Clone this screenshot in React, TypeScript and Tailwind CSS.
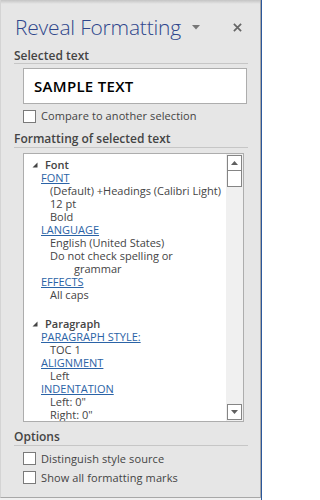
import React from "react";

const Tri = () => (
  <svg width="6" height="6" viewBox="0 0 6 6" className="shrink-0">
    <polygon points="5.5,0.5 5.5,5.5 0.5,5.5" fill="#444" />
  </svg>
);

const Check = ({ label }: { label: string }) => (
  <div className="flex items-center h-[19px] pl-[9px]">
    <div className="w-[13px] h-[13px] border border-[#7a7a7a] bg-white shrink-0" />
    <span className="ml-[5px] text-[11px] leading-[14px] text-[#444] tracking-[0.1px]">{label}</span>
  </div>
);

const Row = ({ children, cls = "" }: { children: React.ReactNode; cls?: string }) => (
  <div className={`h-[13px] flex items-center whitespace-nowrap ${cls}`}>{children}</div>
);

const Link = ({ t }: { t: string }) => (
  <Row cls="pl-[17px]">
    <span className="leading-[13px] text-[#2b63a6] underline underline-offset-[1px] decoration-[#2b63a6]">{t}</span>
  </Row>
);

const Val = ({ t, pl = "pl-[26px]" }: { t: string; pl?: string }) => (
  <Row cls={pl}>
    <span className="leading-[13px]">{t}</span>
  </Row>
);

export default function App() {
  return (
    <div
      className="w-[262px] h-[500px] flex bg-[#f0f0f0] overflow-hidden"
      style={{ fontFamily: "'Segoe UI','Open Sans','Noto Sans',sans-serif" }}
    >
      <div className="w-[261px] h-[498px] flex flex-col bg-[#e6e6e6] border-r border-b border-[#a8a8a8] border-l border-l-[#d4d4d4]">
        <div className="h-[4px] bg-gradient-to-b from-[#c4c4c4] to-[#e6e6e6]" />
        {/* title */}
        <div className="h-[46px] flex items-center pl-[14px] pr-[18px]">
          <span className="text-[21px] font-light text-[#2f468c] leading-none tracking-[-0.2px]">Reveal Formatting</span>
          <svg width="8" height="5" viewBox="0 0 8 5" className="ml-[11px] mt-[1px]">
            <polygon points="0,0 8,0 4,4.5" fill="#777" />
          </svg>
          <svg width="9" height="9" viewBox="0 0 10 10" className="ml-auto">
            <path d="M1 1 L9 9 M9 1 L1 9" stroke="#666" strokeWidth="1.9" />
          </svg>
        </div>
        <div className="pl-[13px] pr-[12px] flex flex-col">
          <div className="h-[14px] flex items-center border-b border-[#c6c6c6] text-[12px] font-semibold text-[#444] pb-[1px] leading-[14px]">
            Selected text
          </div>
          <div className="mt-[4px] ml-[9px] h-[36px] w-[224px] bg-white border border-[#adadad] flex items-center pl-[10px] text-[15px] font-semibold text-black tracking-[0.3px]">
            SAMPLE TEXT
          </div>
          <div className="h-[24px] flex items-center pl-[9px]">
            <div className="w-[13px] h-[13px] border border-[#7a7a7a] bg-white shrink-0" />
            <span className="ml-[5px] text-[11px] leading-[14px] text-[#444] tracking-[0.1px]">Compare to another selection</span>
          </div>
          <div className="h-[20px] flex items-end border-b border-[#c6c6c6] text-[12px] font-semibold text-[#444] leading-[17px]">
            Formatting of selected text
          </div>
          {/* list box */}
          <div className="mt-[5px] ml-[9px] w-[221px] h-[269px] bg-white border border-[#adadad] flex">
            <div className="flex-1 overflow-hidden pt-[4px] text-[11px] text-[#444] leading-[13px]">
              <Row cls="pl-[8px] font-semibold">
                <Tri />
                <span className="ml-[7px] leading-[13px]">Font</span>
              </Row>
              <Link t="FONT" />
              <Val t="(Default) +Headings (Calibri Light)" />
              <Val t="12 pt" />
              <Val t="Bold" />
              <Link t="LANGUAGE" />
              <Val t="English (United States)" />
              <Val t="Do not check spelling or" />
              <Val t="grammar" pl="pl-[50px]" />
              <Link t="EFFECTS" />
              <Val t="All caps" />
              <div className="h-[16px]" />
              <Row cls="pl-[8px] font-semibold">
                <Tri />
                <span className="ml-[7px] leading-[13px]">Paragraph</span>
              </Row>
              <Link t="PARAGRAPH STYLE:" />
              <Val t="TOC 1" />
              <Link t="ALIGNMENT" />
              <Val t="Left" />
              <Link t="INDENTATION" />
              <Val t={'Left:  0"'} />
              <Val t={'Right:  0"'} />
            </div>
            <div className="w-[17px] flex flex-col px-[1px] py-[1px] bg-[#f0f0f0]">
              <div className="h-[16px] border border-[#858585] bg-white flex items-center justify-center">
                <svg width="7" height="4" viewBox="0 0 7 4">
                  <polygon points="0,4 7,4 3.5,0" fill="#606060" />
                </svg>
              </div>
              <div className="h-[16px] border-x border-b border-[#858585] bg-white" />
              <div className="flex-1" />
              <div className="h-[16px] border border-[#858585] bg-white flex items-center justify-center">
                <svg width="7" height="4" viewBox="0 0 7 4">
                  <polygon points="0,0 7,0 3.5,4" fill="#606060" />
                </svg>
              </div>
            </div>
          </div>
          <div className="h-[24px] flex items-end border-b border-[#c6c6c6] text-[12px] font-semibold text-[#444] leading-[17px]">
            Options
          </div>
          <div className="h-[3px]" />
          <Check label="Distinguish style source" />
          <Check label="Show all formatting marks" />
        </div>
      </div>
      <div className="w-[1px] h-full bg-[#2b579a]" />
    </div>
  );
}
